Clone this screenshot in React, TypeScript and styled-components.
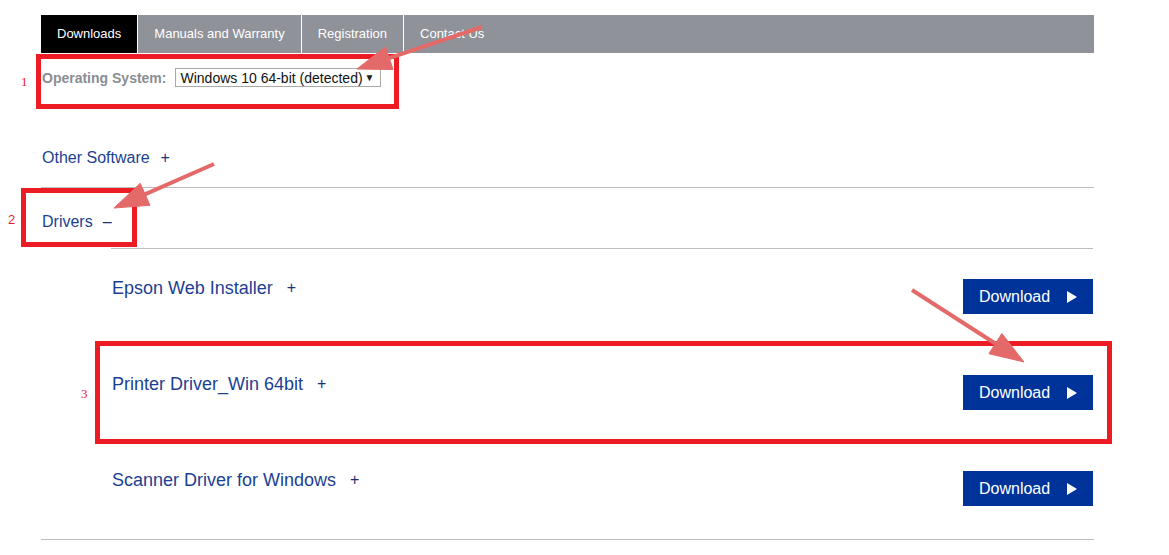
import React from 'react';
import styled, { createGlobalStyle } from 'styled-components';

const GlobalStyle = createGlobalStyle`
  html, body {
    margin: 0;
    padding: 0;
    background: #fff;
  }
  body {
    font-family: "Liberation Sans", Arial, sans-serif;
  }
`;

const tabs = ['Downloads', 'Manuals and Warranty', 'Registration', 'Contact Us'];

const drivers = [
  { title: 'Epson Web Installer' },
  { title: 'Printer Driver_Win 64bit' },
  { title: 'Scanner Driver for Windows' },
];

const Page = styled.div`
  position: relative;
  width: 1169px;
  height: 555px;
  overflow: hidden;
  box-sizing: border-box;
  padding: 15px 0 0 41px;
`;

const Content = styled.div`
  width: 1053px;
`;

const TabBar = styled.div`
  display: flex;
  height: 38px;
  background: #8f9299;
`;

const Tab = styled.div<{ $active?: boolean }>`
  padding: 0 16px;
  line-height: 38px;
  font-size: 13px;
  color: #fff;
  background: ${p => (p.$active ? '#000' : 'transparent')};
  border-right: 1px solid #fff;
  &:last-child {
    border-right: none;
  }
`;

const OsRow = styled.div`
  display: flex;
  align-items: center;
  margin-top: 15px;
  height: 19px;
`;

const OsLabel = styled.span`
  font-size: 14px;
  font-weight: bold;
  color: #8a8d93;
  margin-left: 1px;
`;

const Select = styled.div`
  display: flex;
  align-items: center;
  justify-content: space-between;
  box-sizing: border-box;
  margin-left: 9px;
  width: 206px;
  height: 19px;
  padding: 0 6px 0 4px;
  border: 1px solid #a9a9a9;
  font-size: 14px;
  color: #111;
`;

const Caret = styled.span`
  font-size: 10px;
  color: #222;
`;

const Section = styled.div<{ $pad: string }>`
  padding: ${p => p.$pad};
  border-bottom: 1px solid #bdbdbd;
`;

const SectionHead = styled.div`
  display: flex;
  align-items: center;
  height: 20px;
  margin-left: 1px;
  font-size: 16px;
  color: #1c3f94;
`;

const Toggle = styled.span<{ $gap: number }>`
  margin-left: ${p => p.$gap}px;
  color: #1f2f78;
  font-size: 16px;
`;

const DriverList = styled.div`
  margin: 16px 1px 0 70px;
  padding-bottom: 2px;
  border-top: 1px solid #bdbdbd;
`;

const DriverRow = styled.div`
  display: flex;
  align-items: flex-start;
  justify-content: space-between;
  height: 96px;
  box-sizing: border-box;
  padding-top: 30px;
`;

const DriverTitle = styled.div`
  display: flex;
  align-items: center;
  height: 22px;
  margin-left: 1px;
  margin-top: -2px;
  font-size: 18px;
  color: #1c3f94;
`;

const DownloadButton = styled.button`
  display: flex;
  align-items: center;
  box-sizing: border-box;
  width: 130px;
  height: 35px;
  padding: 0 0 0 16px;
  border: none;
  background: #003399;
  color: #fff;
  font-family: "Liberation Sans", Arial, sans-serif;
  font-size: 16px;
  cursor: pointer;
`;

const Play = styled.span`
  margin-left: 17px;
  width: 0;
  height: 0;
  border-top: 6px solid transparent;
  border-bottom: 6px solid transparent;
  border-left: 10px solid #fff;
`;

/* red markup drawn over the page */
const MarkBox = styled.div`
  position: absolute;
  box-sizing: border-box;
  border: 5px solid #ed1c24;
  pointer-events: none;
`;

const MarkNumber = styled.span<{ $serif?: boolean }>`
  position: absolute;
  font-family: ${p => (p.$serif ? '"Liberation Serif", serif' : '"Liberation Sans", sans-serif')};
  font-size: 13px;
  color: #ed1c24;
`;

const ArrowLayer = styled.svg`
  position: absolute;
  left: 0;
  top: 0;
  pointer-events: none;
`;

const Arrow = ({ x1, y1, x2, y2 }: { x1: number; y1: number; x2: number; y2: number }) => {
  const dx = x2 - x1;
  const dy = y2 - y1;
  const len = Math.hypot(dx, dy);
  const ux = dx / len;
  const uy = dy / len;
  const headLen = 34;
  const headW = 12;
  const bx = x2 - ux * headLen;
  const by = y2 - uy * headLen;
  const px = -uy * headW;
  const py = ux * headW;
  return (
    <g fill="#e46a6a" stroke="#e46a6a">
      <line x1={x1} y1={y1} x2={bx + ux * 4} y2={by + uy * 4} strokeWidth={4} />
      <polygon
        points={`${x2},${y2} ${bx + px},${by + py} ${bx - px},${by - py}`}
        strokeWidth={1}
      />
    </g>
  );
};

export default function App() {
  return (
    <>
      <GlobalStyle />
      <Page>
        <Content>
          <TabBar>
            {tabs.map((t, i) => (
              <Tab key={t} $active={i === 0}>{t}</Tab>
            ))}
          </TabBar>

          <OsRow>
            <OsLabel>Operating System:</OsLabel>
            <Select>
              <span>Windows 10 64-bit (detected)</span>
              <Caret>▼</Caret>
            </Select>
          </OsRow>

          <Section $pad="61px 0 19px">
            <SectionHead>
              Other Software
              <Toggle $gap={11}>+</Toggle>
            </SectionHead>
          </Section>

          <Section $pad="24px 0 0">
            <SectionHead>
              Drivers
              <Toggle $gap={10}>–</Toggle>
            </SectionHead>
            <DriverList>
              {drivers.map(d => (
                <DriverRow key={d.title}>
                  <DriverTitle>
                    {d.title}
                    <Toggle $gap={14}>+</Toggle>
                  </DriverTitle>
                  <DownloadButton>
                    Download
                    <Play />
                  </DownloadButton>
                </DriverRow>
              ))}
            </DriverList>
          </Section>
        </Content>

        <MarkBox style={{ left: 36, top: 54, width: 363, height: 55 }} />
        <MarkBox style={{ left: 21, top: 188, width: 116, height: 59 }} />
        <MarkBox style={{ left: 95, top: 341, width: 1017, height: 103 }} />
        <MarkNumber $serif style={{ left: 21, top: 74 }}>1</MarkNumber>
        <MarkNumber style={{ left: 8, top: 212 }}>2</MarkNumber>
        <MarkNumber $serif style={{ left: 81, top: 386 }}>3</MarkNumber>

        <ArrowLayer width={1169} height={555}>
          <Arrow x1={482} y1={27} x2={357} y2={69} />
          <Arrow x1={214} y1={164} x2={114} y2={208} />
          <Arrow x1={912} y1={290} x2={1024} y2={362} />
        </ArrowLayer>
      </Page>
    </>
  );
}
